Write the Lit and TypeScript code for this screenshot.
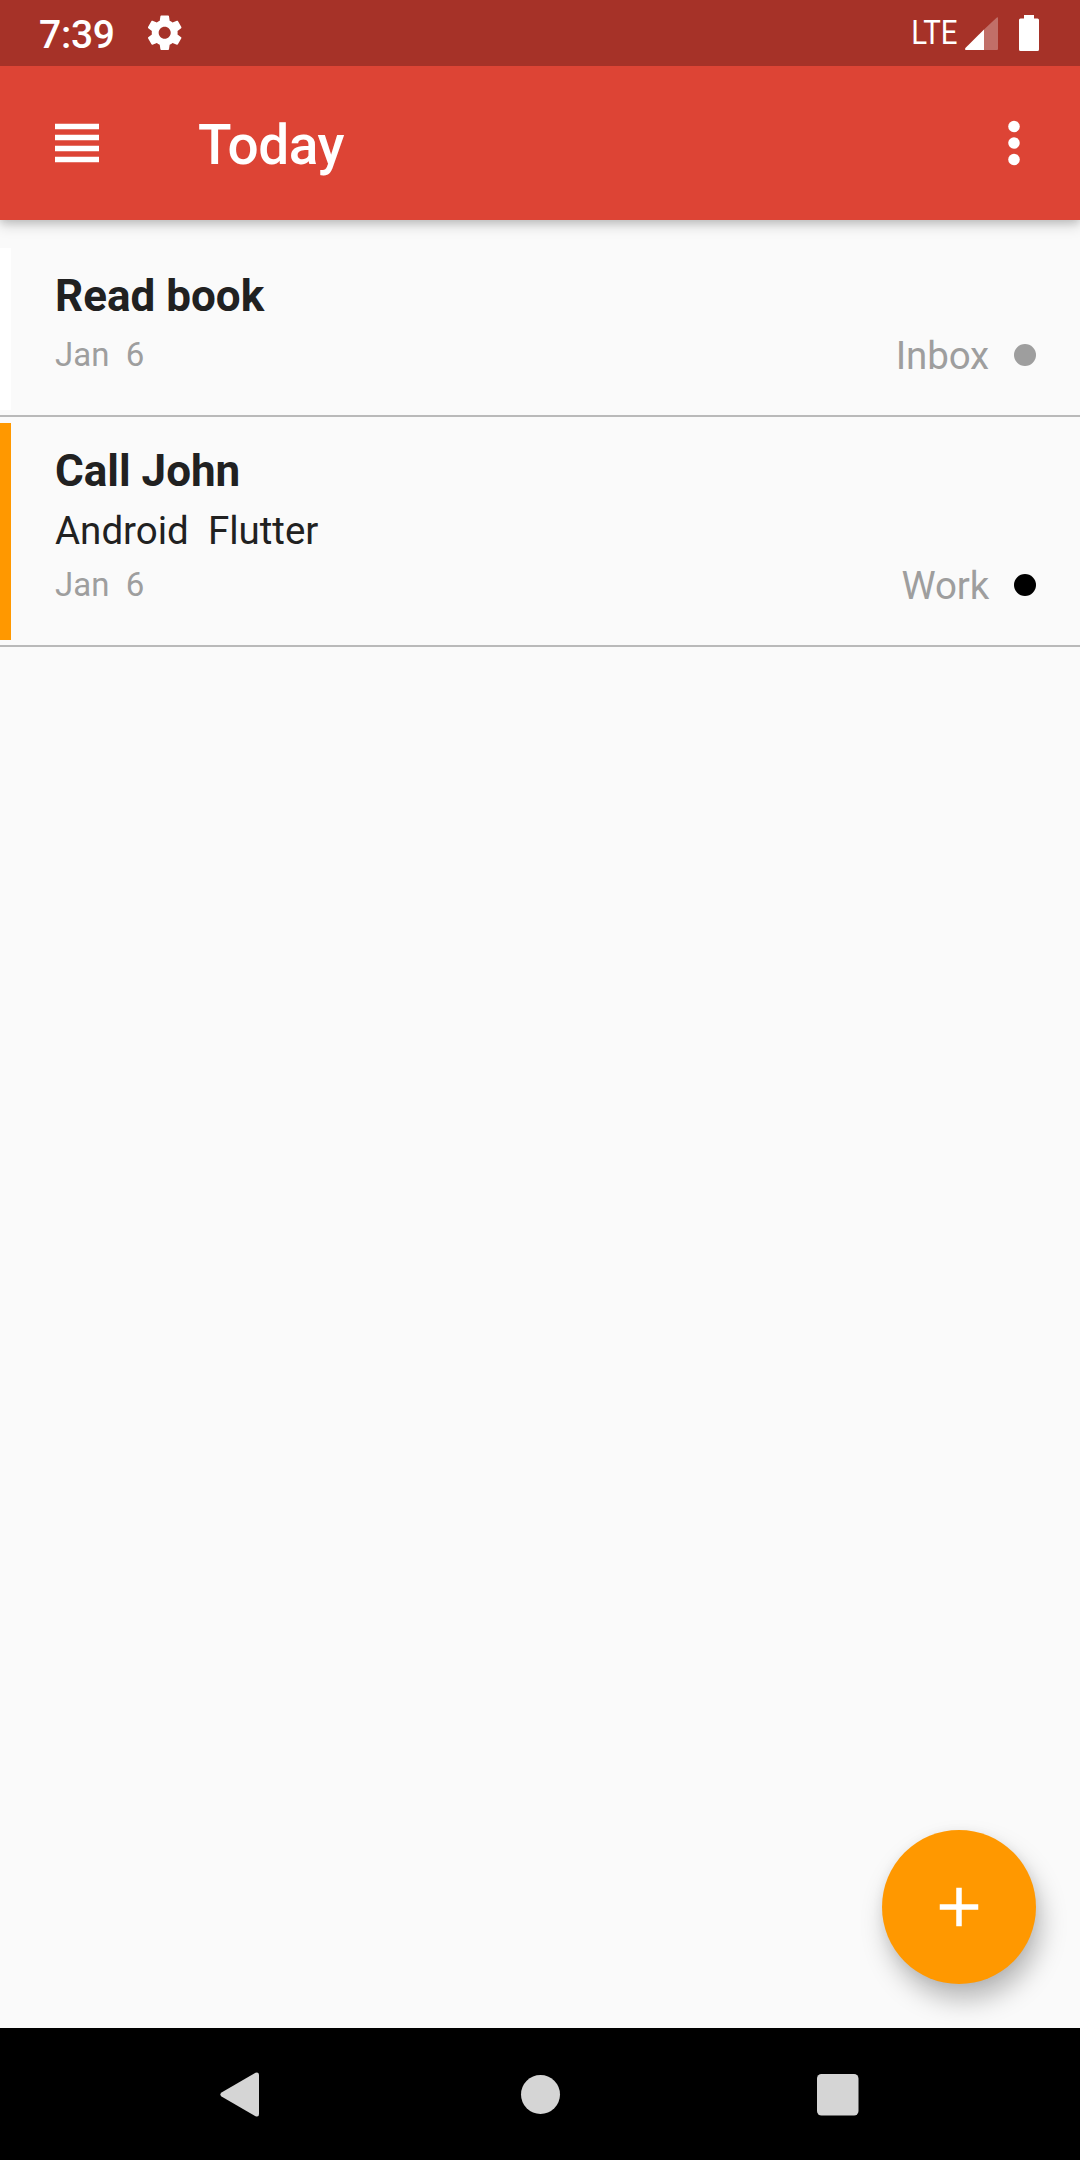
import { LitElement, html, css, nothing } from "lit";
import { customElement, property } from "lit/decorators.js";

interface Task {
  title: string;
  tags: string[];
  due: string;
  project: string;
  projectColor: string;
  priorityColor: string;
}

const TASKS: Task[] = [
  {
    title: "Read book",
    tags: [],
    due: "Jan  6",
    project: "Inbox",
    projectColor: "#9e9e9e",
    priorityColor: "#ffffff",
  },
  {
    title: "Call John",
    tags: ["Android", "Flutter"],
    due: "Jan  6",
    project: "Work",
    projectColor: "#000000",
    priorityColor: "#ff9800",
  },
];

@customElement("status-bar")
class StatusBar extends LitElement {
  static styles = css`
    :host {
      display: flex;
      align-items: center;
      height: 66px;
      box-sizing: border-box;
      padding: 0 41px 0 39px;
      background: #a63228;
      color: #fff;
    }
    .clock {
      font-size: 39px;
      font-weight: 500;
      line-height: 46px;
      letter-spacing: -0.25px;
      padding-top: 3px;
      width: 105px;
    }
    .gear {
      width: 41.4px;
      height: 41.4px;
    }
    .spacer {
      flex: 1;
    }
    .network {
      font-size: 33.5px;
      line-height: 40px;
      transform: scaleX(0.88);
      transform-origin: right center;
      margin-right: 7px;
    }
    .signal {
      width: 34px;
      height: 36px;
      margin-right: 20px;
    }
    .battery {
      width: 20px;
      height: 36px;
    }
    svg {
      display: block;
    }
  `;

  render() {
    return html`
      <span class="clock">7:39</span>
      <svg class="gear" viewBox="0 0 24 24" fill="#fff">
        <path
          d="M19.43 12.98c.04-.32.07-.64.07-.98s-.03-.66-.07-.98l2.11-1.65c.19-.15.24-.42.12-.64l-2-3.46c-.12-.22-.39-.3-.61-.22l-2.49 1c-.52-.4-1.08-.73-1.69-.98l-.38-2.65C14.46 2.18 14.25 2 14 2h-4c-.25 0-.46.18-.49.42l-.38 2.65c-.61.25-1.17.59-1.69.98l-2.49-1c-.23-.09-.49 0-.61.22l-2 3.46c-.13.22-.07.49.12.64l2.11 1.65c-.04.32-.07.65-.07.98s.03.66.07.98l-2.11 1.65c-.19.15-.24.42-.12.64l2 3.46c.12.22.39.3.61.22l2.49-1c.52.4 1.08.73 1.69.98l.38 2.65c.03.24.24.42.49.42h4c.25 0 .46-.18.49-.42l.38-2.65c.61-.25 1.17-.59 1.69-.98l2.49 1c.23.09.49 0 .61-.22l2-3.46c.12-.22.07-.49-.12-.64l-2.11-1.65zM12 15.5c-1.93 0-3.5-1.57-3.5-3.5s1.57-3.5 3.5-3.5 3.5 1.57 3.5 3.5-1.57 3.5-3.5 3.5z"
        />
      </svg>
      <span class="spacer"></span>
      <span class="network">LTE</span>
      <svg class="signal" viewBox="0 0 34 36">
        <path d="M19 14.400 31.300 2.900Q33 1.400 33 3.500V34Q33 35 32 35H19z" fill="#fff" fill-opacity=".3" />
        <path d="M19 14.400V35H1Q-.6 35 .4 33z" fill="#fff" />
      </svg>
      <svg class="battery" viewBox="0 0 20 36" fill="#fff">
        <path d="M5 0H15V3.500H18.500Q20 3.500 20 5V34.500Q20 36 18.500 36H1.500Q0 36 0 34.500V5Q0 3.500 1.500 3.500H5z" />
      </svg>
    `;
  }
}

@customElement("app-bar")
class AppBar extends LitElement {
  @property() heading = "";

  static styles = css`
    :host {
      display: flex;
      align-items: center;
      height: 154px;
      box-sizing: border-box;
      padding: 0 33px 0 44px;
      background: #dd4435;
      color: #fff;
      box-shadow: 0 5px 13px rgba(0, 0, 0, 0.18), 0 3px 7px rgba(0, 0, 0, 0.1);
    }
    .icon {
      display: block;
      width: 66px;
      height: 66px;
      fill: #fff;
    }
    .heading {
      flex: 1;
      margin: 0;
      padding: 4px 0 0 88px;
      font-size: 55px;
      font-weight: 500;
      line-height: 64px;
      letter-spacing: -0.4px;
    }
  `;

  render() {
    return html`
      <svg class="icon" viewBox="0 0 24 24">
        <path d="M4 15h16v-2H4v2zm0 4h16v-2H4v2zm0-8h16V9H4v2zm0-6v2h16V5H4z" />
      </svg>
      <h1 class="heading">${this.heading}</h1>
      <svg class="icon" viewBox="0 0 24 24">
        <circle cx="12" cy="6" r="2.100" />
        <circle cx="12" cy="12" r="2.100" />
        <circle cx="12" cy="18" r="2.100" />
      </svg>
    `;
  }
}

@customElement("task-row")
class TaskRow extends LitElement {
  @property({ attribute: false }) task!: Task;

  static styles = css`
    :host {
      display: flex;
      border-bottom: 2px solid #b9b9b9;
    }
    .priority {
      width: 11px;
      margin: 5.5px 0;
      flex: none;
    }
    .body {
      flex: 1;
      padding: 28px 44px 37px 44px;
    }
    .title {
      font-size: 44px;
      font-weight: 700;
      line-height: 52px;
      margin-bottom: 11px;
      color: #212121;
    }
    .tags {
      font-size: 38.5px;
      line-height: 45px;
      margin-bottom: 10px;
      color: #212121;
      white-space: pre;
    }
    .meta {
      display: flex;
      height: 45px;
      color: #9e9e9e;
    }
    .due {
      flex: 1;
      padding-top: 2px;
      font-size: 33px;
      line-height: 39px;
      white-space: pre;
    }
    .project {
      font-size: 38.5px;
      line-height: 45px;
      letter-spacing: -0.15px;
    }
    .dot {
      width: 22px;
      height: 22px;
      margin: 10.5px 0 0 25px;
      border-radius: 50%;
    }
  `;

  render() {
    const t = this.task;
    return html`
      <div class="priority" style="background:${t.priorityColor}"></div>
      <div class="body">
        <div class="title">${t.title}</div>
        ${t.tags.length ? html`<div class="tags">${t.tags.join("  ")}</div>` : nothing}
        <div class="meta">
          <span class="due">${t.due}</span>
          <span class="project">${t.project}</span>
          <span class="dot" style="background:${t.projectColor}"></span>
        </div>
      </div>
    `;
  }
}

@customElement("nav-bar")
class NavBar extends LitElement {
  static styles = css`
    :host {
      display: flex;
      justify-content: space-between;
      align-items: center;
      height: 132px;
      box-sizing: border-box;
      padding: 0 221px 0 220px;
      background: #000;
    }
    svg {
      display: block;
      width: 42px;
      height: 46px;
      fill: #d5d5d5;
    }
  `;

  render() {
    return html`
      <svg viewBox="0 0 42 46">
        <path d="M1.500 21.500 35.500 1.800Q39 .5 39 4V43Q39 46.500 35.500 45.200L1.500 25.500Q-.8 23.500 1.500 21.500z" />
      </svg>
      <svg viewBox="0 0 42 46"><circle cx="21.500" cy="23.500" r="19.500" /></svg>
      <svg viewBox="0 0 42 46"><rect x="0" y="3" width="41.500" height="41.500" rx="4.500" /></svg>
    `;
  }
}

@customElement("app-root")
class AppRoot extends LitElement {
  static styles = css`
    :host {
      display: flex;
      flex-direction: column;
      position: relative;
      width: 1080px;
      height: 2160px;
      overflow: hidden;
      background: #fafafa;
      font-family: Roboto, "Liberation Sans", sans-serif;
    }
    status-bar,
    nav-bar {
      z-index: 1;
    }
    .list {
      flex: 1;
      padding-top: 22px;
    }
    .fab {
      position: absolute;
      right: 44px;
      bottom: 176px;
      display: grid;
      place-items: center;
      width: 154px;
      height: 154px;
      padding: 0;
      border: 0;
      border-radius: 50%;
      background: #ff9800;
      box-shadow: 5px 16px 26px rgba(0, 0, 0, 0.26), 0 2px 12px rgba(0, 0, 0, 0.06);
    }
    .plus {
      width: 66px;
      height: 66px;
      fill: #fff;
    }
  `;

  render() {
    return html`
      <status-bar></status-bar>
      <app-bar heading="Today"></app-bar>
      <main class="list">${TASKS.map((t) => html`<task-row .task=${t}></task-row>`)}</main>
      <button class="fab" aria-label="Add task">
        <svg class="plus" viewBox="0 0 24 24"><path d="M19 13h-6v6h-2v-6H5v-2h6V5h2v6h6v2z" /></svg>
      </button>
      <nav-bar></nav-bar>
    `;
  }
}
